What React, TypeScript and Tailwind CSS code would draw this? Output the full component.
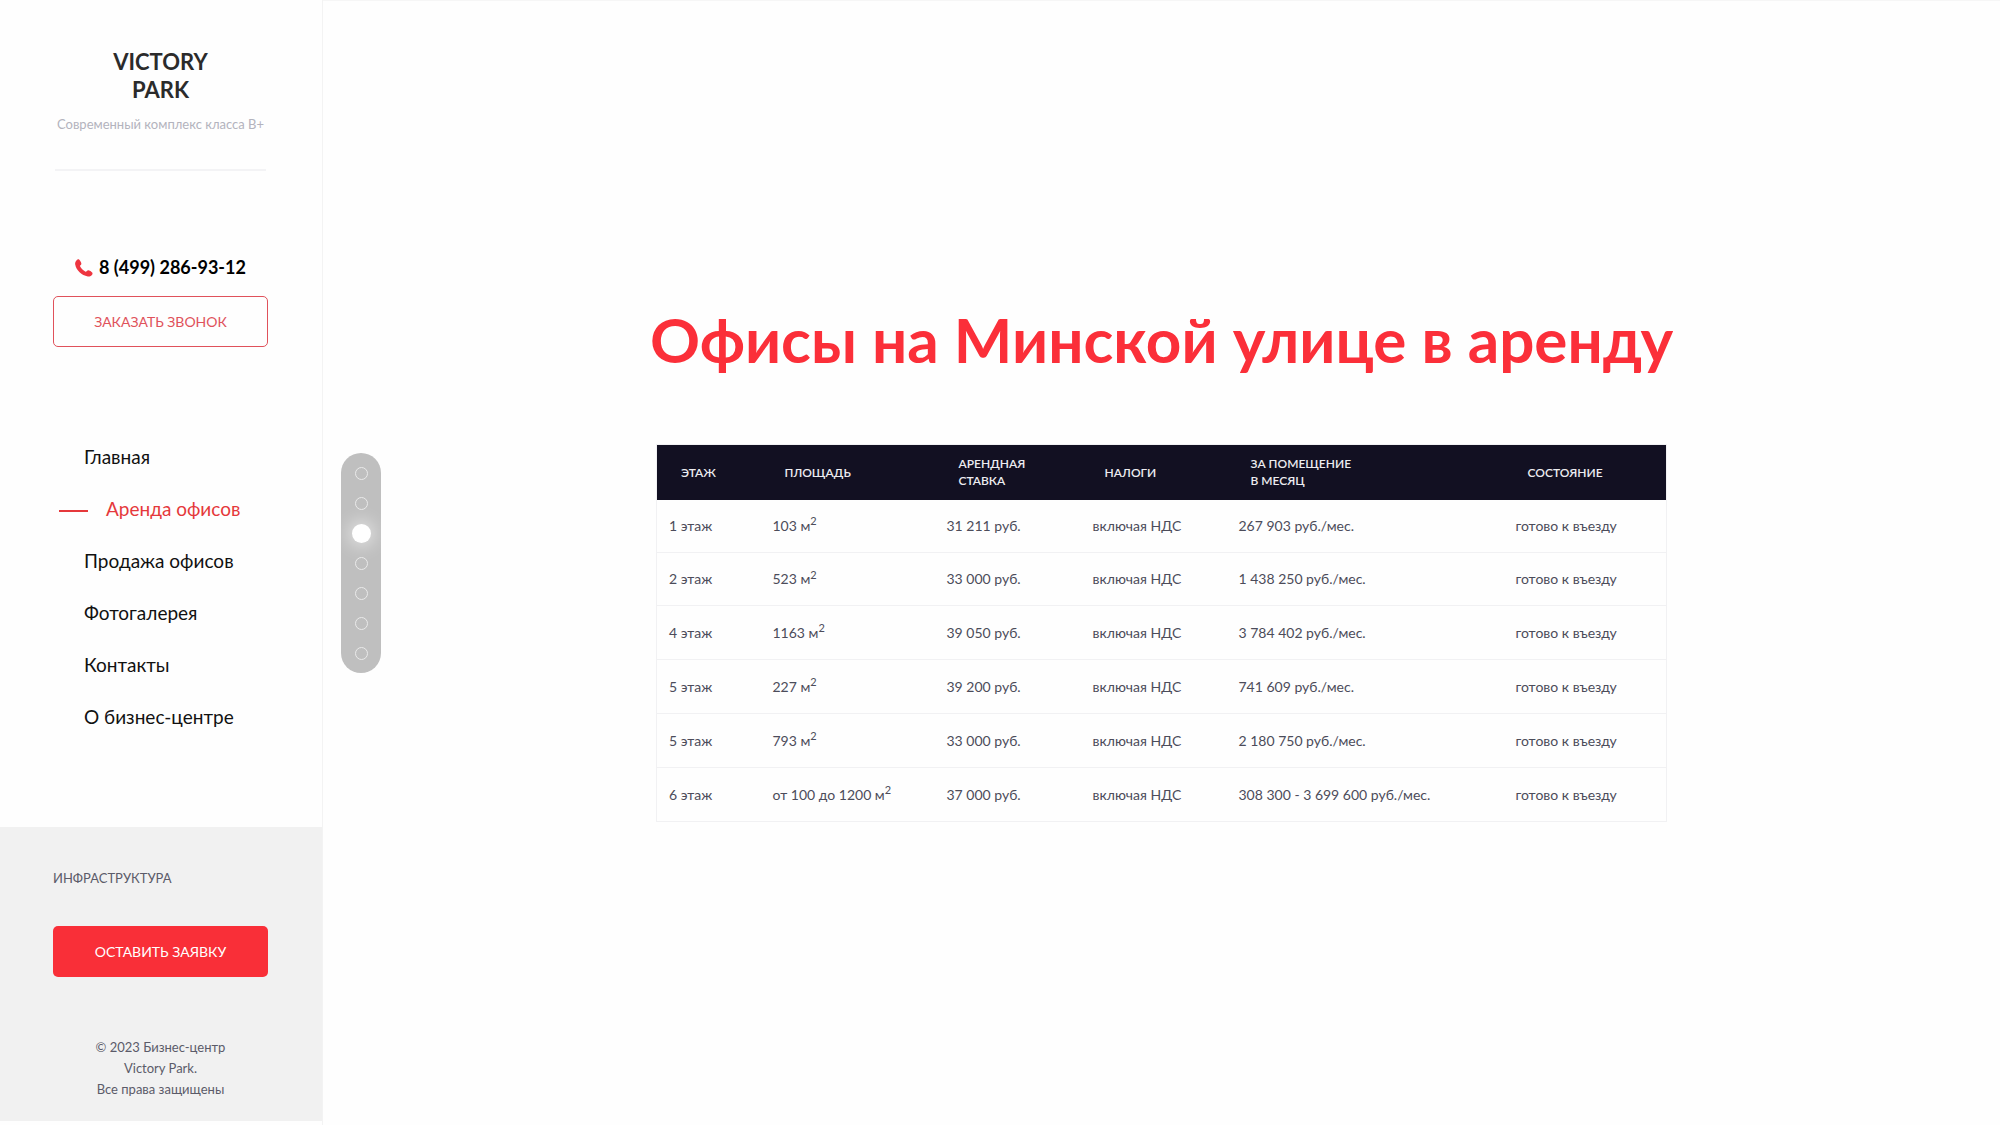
const navItems = [
  'Главная',
  'Аренда офисов',
  'Продажа офисов',
  'Фотогалерея',
  'Контакты',
  'О бизнес-центре',
];
const activeNav = 1;

const slideCount = 7;
const activeSlide = 2;

const rows = [
  ['1 этаж', '103 м', '31 211 руб.', '267 903 руб./мес.'],
  ['2 этаж', '523 м', '33 000 руб.', '1 438 250 руб./мес.'],
  ['4 этаж', '1163 м', '39 050 руб.', '3 784 402 руб./мес.'],
  ['5 этаж', '227 м', '39 200 руб.', '741 609 руб./мес.'],
  ['5 этаж', '793 м', '33 000 руб.', '2 180 750 руб./мес.'],
  ['6 этаж', 'от 100 до 1200 м', '37 000 руб.', '308 300 - 3 699 600 руб./мес.'],
];

function PhoneIcon() {
  return (
    <svg viewBox="0 0 18 18" className="mt-0.5 size-[18px] shrink-0" fill="#ee3540" aria-hidden="true">
      <path d="M1.4 1.500C2.300.5 3.500 0 4.300.7c1 .9 1.700 2.300 2 3.500.2.900-.2 1.500-.9 2.100-.4.400-.4.900-.1 1.400 1.300 2 2.900 3.600 4.900 4.800.6.300 1 .2 1.400-.2.700-.7 1.500-1.200 2.400-.9 1.200.4 2.500 1.200 3.200 2.100.7.900.2 1.900-.5 2.700-1 1.100-2.400 1.500-3.900 1.300C6.600 16.600 1.300 11.500.2 5.600-.1 4 .3 2.600 1.400 1.500Z" />
    </svg>
  );
}

function Sidebar() {
  return (
    <aside className="flex w-[323px] shrink-0 flex-col border-r border-[#f3f3f3] pb-1">
      <div className="flex flex-col pt-12 pr-[54px] pl-[53px] text-center">
        <a href="#home" className="text-[22px] leading-7 font-bold text-[#2b2b2b]">
          VICTORY
          <br />
          PARK
        </a>
        <p className="mt-2.5 text-[13px] leading-5 whitespace-nowrap text-[#b3b3bd]">Современный комплекс класса B+</p>
        <hr className="mx-0.5 mt-[35px] border-t-2 border-[#f3f3f5]" />
        <a
          href="tel:+74992869312"
          className="mt-[84px] flex items-center justify-center gap-1.5 text-lg leading-6 font-bold whitespace-nowrap text-black"
        >
          <PhoneIcon />
          8 (499) 286-93-12
        </a>
        <button
          type="button"
          className="mt-[17px] h-[51px] rounded-[5px] border border-[#e0525b] text-sm text-[#e0525b]"
        >
          ЗАКАЗАТЬ ЗВОНОК
        </button>
      </div>

      <nav className="mt-[84px] pl-[59px] text-[19px]">
        <ul>
          {navItems.map((item, i) => (
            <li key={item}>
              {i === activeNav ? (
                <a href="#rent" aria-current="page" className="flex h-[52px] items-center gap-[18px] text-[#e5383b]">
                  <span className="mt-1 h-0.5 w-[29px] bg-[#e5383b]" />
                  {item}
                </a>
              ) : (
                <a href="#section" className="flex h-[52px] items-center pl-[25px] text-[#111111]">
                  {item}
                </a>
              )}
            </li>
          ))}
        </ul>
      </nav>

      <footer className="mt-auto flex flex-col bg-[#f1f1f1] pt-10 pr-[54px] pb-[21px] pl-[53px] text-[13px] text-[#5b5b69]">
        <a href="#infrastructure" className="leading-[22px]">
          ИНФРАСТРУКТУРА
        </a>
        <button type="button" className="mt-[37px] h-[51px] rounded-[5px] bg-[#f92f38] text-sm text-white">
          ОСТАВИТЬ ЗАЯВКУ
        </button>
        <p className="mt-[60px] text-center leading-[21px]">
          © 2023 Бизнес-центр
          <br />
          Victory Park.
          <br />
          Все права защищены
        </p>
      </footer>
    </aside>
  );
}

function SlideDots() {
  return (
    <div className="absolute top-1/2 left-[18px] w-10 -translate-y-1/2 rounded-full bg-[#bfbfbf] py-[5px]">
      {Array.from({ length: slideCount }, (_, i) => (
        <button
          key={i}
          type="button"
          aria-label={`Слайд ${i + 1}`}
          className="flex h-[30px] w-full items-center justify-center"
        >
          {i === activeSlide ? (
            <span className="size-[19px] rounded-full bg-white shadow-[0_0_16px_4px_rgba(255,255,255,0.5)]" />
          ) : (
            <span className="size-[13px] rounded-full border border-[#eaeaea]" />
          )}
        </button>
      ))}
    </div>
  );
}

function OfficeTable() {
  return (
    <table className="mt-[67px] h-[378px] w-[1011px] max-w-full table-fixed border-collapse border border-[#f1f1f3] text-left text-sm text-[#4c4c5a]">
      <colgroup>
        <col className="w-[104px]" />
        <col className="w-[174px]" />
        <col className="w-[146px]" />
        <col className="w-[146px]" />
        <col className="w-[277px]" />
        <col />
      </colgroup>
      <thead className="bg-[#121022] text-xs leading-[17px] text-[#ececf0]">
        <tr className="h-[55px]">
          <th className="pl-6 font-semibold">ЭТАЖ</th>
          <th className="pl-6 font-semibold">ПЛОЩАДЬ</th>
          <th className="pl-6 font-semibold">
            АРЕНДНАЯ
            <br />
            СТАВКА
          </th>
          <th className="pl-6 font-semibold">НАЛОГИ</th>
          <th className="pl-6 font-semibold">
            ЗА ПОМЕЩЕНИЕ
            <br />В МЕСЯЦ
          </th>
          <th className="pl-6 font-semibold">СОСТОЯНИЕ</th>
        </tr>
      </thead>
      <tbody>
        {rows.map(([floor, area, rate, total]) => (
          <tr key={floor + area} className="border-b border-[#f1f1f3]">
            <td className="pl-3">{floor}</td>
            <td className="pl-3">
              {area}
              <sup className="text-[11px]">2</sup>
            </td>
            <td className="pl-3">{rate}</td>
            <td className="pl-3">включая НДС</td>
            <td className="pl-3">{total}</td>
            <td className="pl-3">готово к въезду</td>
          </tr>
        ))}
      </tbody>
    </table>
  );
}

export default function App() {
  return (
    <div className="flex min-h-screen bg-[#fefefe] font-['Lato','Open_Sans',sans-serif]">
      <Sidebar />
      <main className="relative flex grow flex-col items-center justify-center border-t border-[#f6f6f6] pb-0.5">
        <SlideDots />
        <h1 className="text-center text-[62px] leading-[75px] font-bold text-[#fb2f39]">
          Офисы на Минской улице в аренду
        </h1>
        <OfficeTable />
      </main>
    </div>
  );
}
